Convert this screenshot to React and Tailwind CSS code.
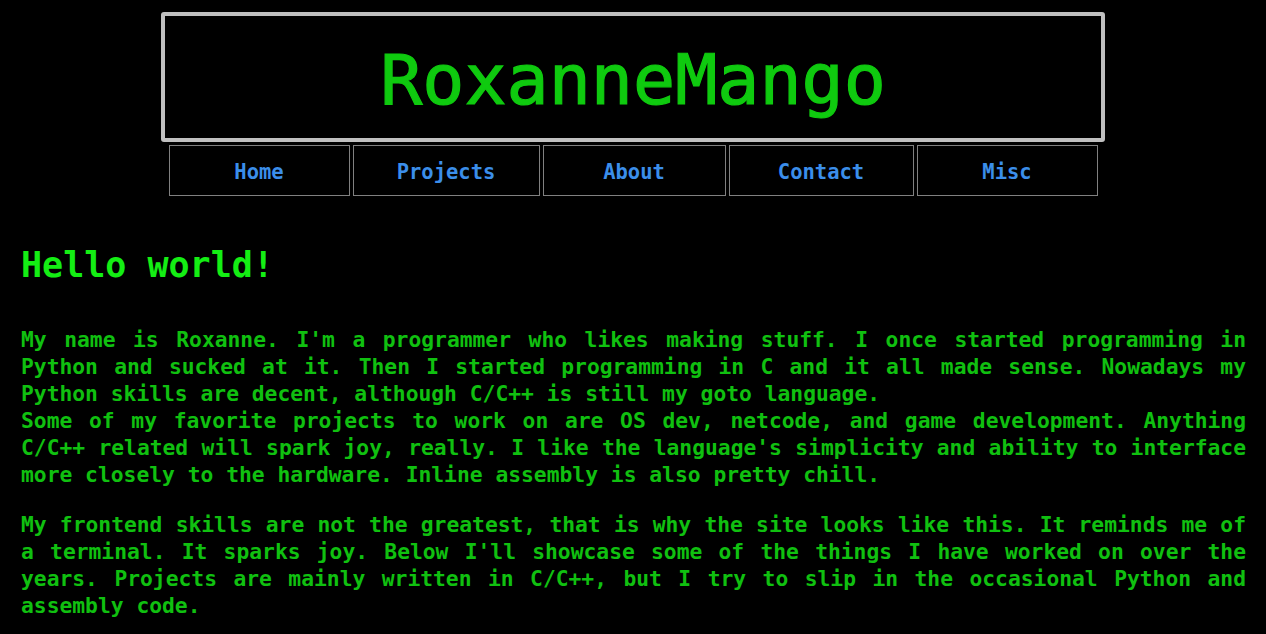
import React from "react";

const LINKS = [
  { label: "Home", w: "w-[181px]" },
  { label: "Projects", w: "w-[187px]" },
  { label: "About", w: "w-[183px]" },
  { label: "Contact", w: "w-[185px]" },
  { label: "Misc", w: "w-[181px]" }
];

export default function App() {
  return (
    <div className="min-h-screen bg-black font-['DejaVu_Sans_Mono',monospace] pt-[12px] pb-[14px]">
      {/* HEADER */}
      <header className="mx-auto w-[944px] h-[130px] border-4 border-[#c0c0c0] rounded-[3px] flex items-center justify-center">
        <h1 className="text-[70px] leading-none text-[#0fca0f] pt-[5px] [-webkit-text-stroke:1.2px_#0fca0f]">
          RoxanneMango
        </h1>
      </header>

      {/* NAV */}
      <nav className="mt-[3px] flex justify-center gap-[3px]">
        {LINKS.map(({ label, w }) => (
          <a
            key={label}
            href="#"
            className={`${w} h-[51px] pt-[3px] border border-[#808080] flex items-center justify-center text-[20.5px] font-bold text-[#3b8eea]`}
          >
            {label}
          </a>
        ))}
      </nav>

      {/* CONTENT */}
      <main className="pl-[21px] pr-[20px] mt-[49px]">
        <h2 className="text-[35px] leading-[40px] font-bold text-[#14ee14]">Hello world!</h2>

        <p className="mt-[41px] text-[21.3px] leading-[27px] font-bold text-[#10c010] text-justify">
          My name is Roxanne. I'm a programmer who likes making stuff. I once started programming in
          Python and sucked at it. Then I started programming in C and it all made sense. Nowadays my
          Python skills are decent, although C/C++ is still my goto language.
          <br />
          Some of my favorite projects to work on are OS dev, netcode, and game development. Anything
          C/C++ related will spark joy, really. I like the language's simplicity and ability to interface
          more closely to the hardware. Inline assembly is also pretty chill.
        </p>

        <p className="mt-[23px] text-[21.3px] leading-[27px] font-bold text-[#10c010] text-justify">
          My frontend skills are not the greatest, that is why the site looks like this. It reminds me of
          a terminal. It sparks joy. Below I'll showcase some of the things I have worked on over the
          years. Projects are mainly written in C/C++, but I try to slip in the occasional Python and
          assembly code.
        </p>
      </main>
    </div>
  );
}
